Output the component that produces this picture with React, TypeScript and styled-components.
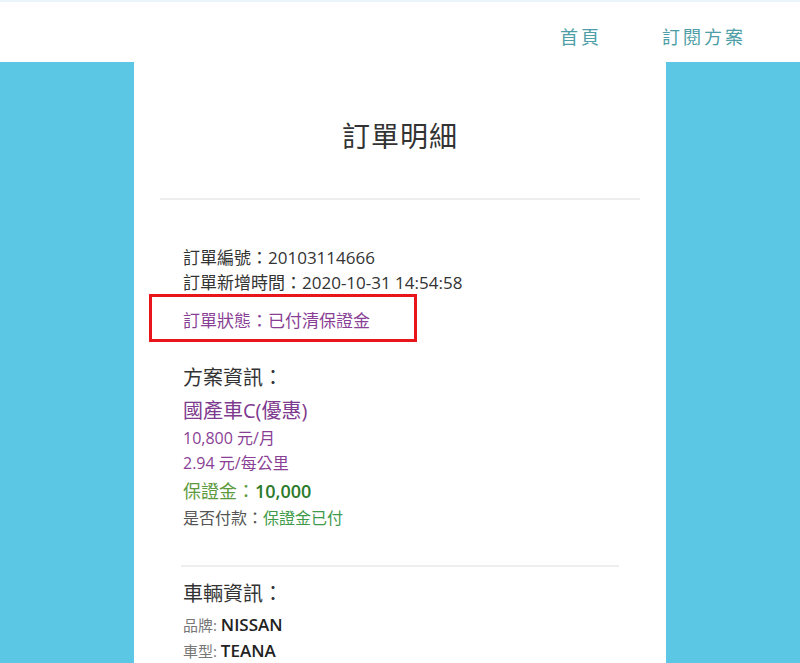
import React from "react";
import styled, { createGlobalStyle } from "styled-components";

const Global = createGlobalStyle`
  html, body { margin: 0; padding: 0; }
  body {
    background: #5cc7e5;
    font-family: "Open Sans", "Noto Sans CJK TC", sans-serif;
    color: #333;
  }
`;

const Header = styled.header`
  height: 60px;
  background: #fff;
  border-top: 2px solid #eaf5f9;
  display: flex;
  justify-content: flex-end;
  align-items: center;
  padding-right: 24px;
`;

const NavLink = styled.a`
  font-size: 18px;
  letter-spacing: 3px;
  color: #4d9ea6;
  padding: 0 30px;
  margin-top: 8px;
  text-decoration: none;
`;

const Card = styled.main`
  width: 532px;
  margin: 0 auto;
  background: #fff;
  min-height: 601px;
`;

const TitleBlock = styled.div`
  box-sizing: border-box;
  height: 138px;
  padding-top: 10px;
  display: flex;
  align-items: center;
  justify-content: center;
  border-bottom: 2px solid #eeeeee;
  margin: 0 26px;
`;

const Title = styled.h1`
  margin: 0;
  font-size: 28px;
  font-weight: 400;
  color: #333;
  letter-spacing: 1px;
`;

const Body = styled.section`
  padding: 45px 47px 0;
`;

const Line = styled.div<{ $lh?: number; $mt?: number; $size?: number; $color?: string }>`
  font-size: ${(p) => p.$size ?? 17}px;
  line-height: ${(p) => p.$lh ?? 25}px;
  margin-top: ${(p) => p.$mt ?? 0}px;
  color: ${(p) => p.$color ?? "#333"};
  padding-left: 2px;
`;

const StatusLine = styled(Line)`
  position: relative;
`;

const Highlight = styled.div`
  position: absolute;
  left: -32px;
  top: -14px;
  width: 262px;
  height: 42px;
  border: 3px solid #e8161b;
`;

const Strong = styled.span<{ $color: string }>`
  font-weight: 600;
  color: ${(p) => p.$color};
`;

const Value = styled.span<{ $color: string }>`
  color: ${(p) => p.$color};
`;

const Divider = styled.hr`
  border: none;
  border-top: 2px solid #eeeeee;
  margin: 33px 0 0;
`;

const SmallLabel = styled.span`
  font-size: 15px;
  color: #777;
`;

const CarValue = styled.span`
  font-size: 17px;
  font-weight: 600;
  color: #222;
`;

export default function App() {
  return (
    <div lang="zh-TW">
      <Global />
      <Header>
        <NavLink>首頁</NavLink>
        <NavLink>訂閱方案</NavLink>
      </Header>
      <Card>
        <TitleBlock>
          <Title>訂單明細</Title>
        </TitleBlock>
        <Body>
          <Line>訂單編號：20103114666</Line>
          <Line>訂單新增時間：2020-10-31 14:54:58</Line>
          <StatusLine $mt={13} $color="#8a3f96">
            訂單狀態：已付清保證金
            <Highlight />
          </StatusLine>
          <Line $mt={30} $size={20} $lh={30}>方案資訊：</Line>
          <Line $mt={3} $size={20} $lh={30} $color="#7e3a8e">國產車C(優惠)</Line>
          <Line $size={16} $lh={25} $color="#8a3f96">10,800 元/月</Line>
          <Line $size={16} $lh={25} $color="#8a3f96">2.94 元/每公里</Line>
          <Line $mt={2} $size={18} $lh={27} $color="#5e9a3e">
            保證金：<Strong $color="#2b7a2b">10,000</Strong>
          </Line>
          <Line $size={16} $lh={27} $color="#555">
            是否付款：<Value $color="#3f9a4a">保證金已付</Value>
          </Line>
          <Divider />
          <Line $mt={12} $size={20} $lh={30}>車輛資訊：</Line>
          <Line $mt={3} $lh={26}>
            <SmallLabel>品牌: </SmallLabel>
            <CarValue>NISSAN</CarValue>
          </Line>
          <Line $lh={26}>
            <SmallLabel>車型: </SmallLabel>
            <CarValue>TEANA</CarValue>
          </Line>
        </Body>
      </Card>
    </div>
  );
}
